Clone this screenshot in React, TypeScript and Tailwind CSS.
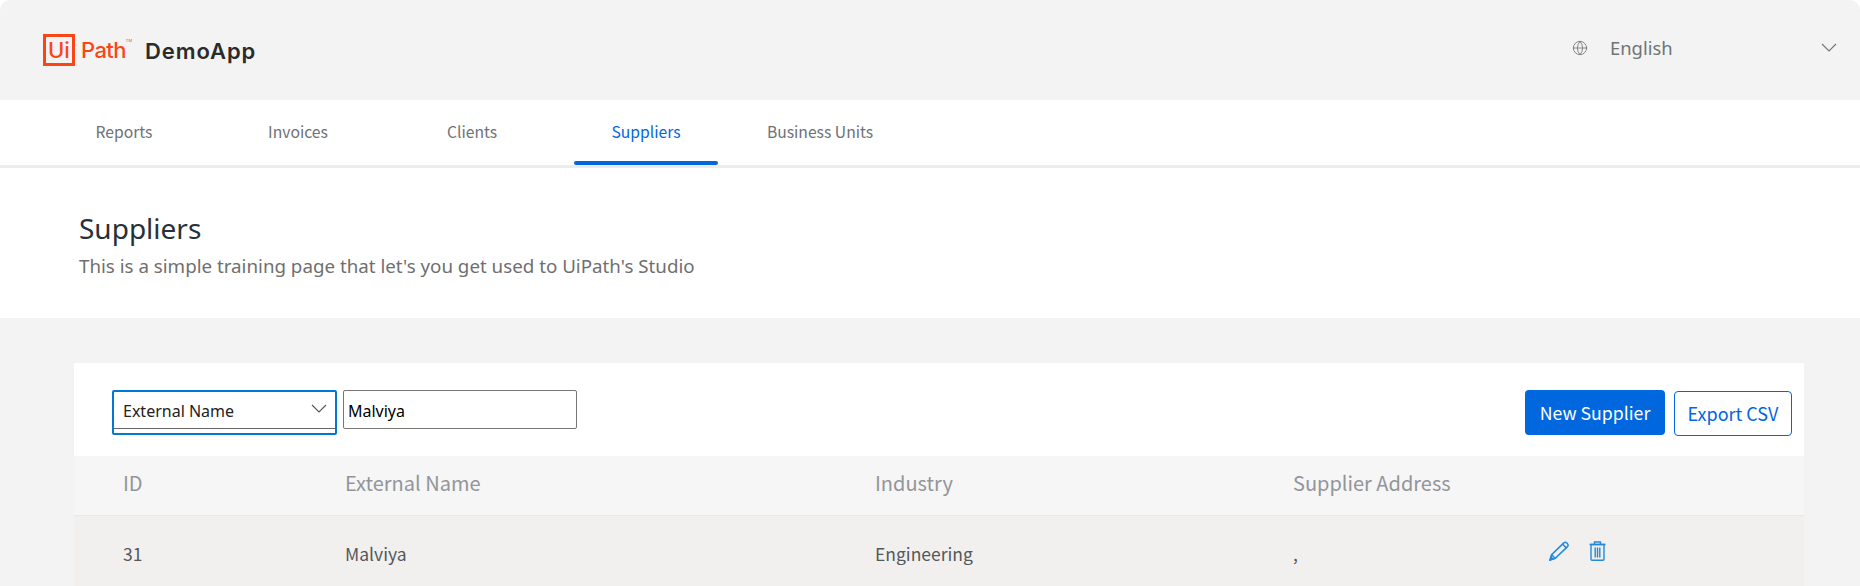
import { Globe } from 'lucide-react';

const TABS = ['Reports', 'Invoices', 'Clients', 'Suppliers', 'Business Units'];

function Chevron({ className }: { className?: string }) {
  return (
    <svg viewBox="0 0 16 9" fill="none" stroke="currentColor" strokeWidth="1.1" className={className}>
      <path d="M1 1l7 7 7-7" />
    </svg>
  );
}

function PencilIcon() {
  return (
    <svg viewBox="0 0 21 20" fill="none" stroke="#2389dc" strokeWidth="1.5" className="h-[20px] w-[21px]">
      <path d="M1 19l1.6-5.4L14.8 1.9a2 2 0 0 1 2.9 0l.8.8a2 2 0 0 1 0 2.9L6.3 17.4z" />
      <path d="M2.6 13.6l3.7 3.8M13.6 3.2l3.8 3.7" />
      <path d="M1 19l3-.9-2.1-2.1z" fill="#2389dc" />
    </svg>
  );
}

function TrashIcon() {
  return (
    <svg viewBox="0 0 17 20" fill="none" stroke="#2389dc" strokeWidth="1.4" className="h-[20px] w-[17px]">
      <path d="M0.5 3.5h16M5.5 3.3V1h6v2.3" />
      <path d="M2 3.5v14.8a1 1 0 0 0 1 1h11a1 1 0 0 0 1-1V3.5z" />
      <path d="M6.2 6.5v10M8.5 6.5v10M10.8 6.5v10" />
    </svg>
  );
}

export default function App() {
  return (
    <div className="h-[586px] overflow-hidden bg-white font-['Noto_Sans_CJK_SC','Noto_Sans',sans-serif]">
      <header className="flex h-[100px] items-center justify-between rounded-t-[10px] bg-[#f3f3f3] pl-[43px] pr-[23px]">
        <div className="flex items-center">
          <div className="flex items-center font-['Inter',sans-serif] text-[#fa4616]">
            <span className="flex h-[32px] w-[32px] items-center justify-center border-[3px] border-[#fa4616] text-[22px] leading-none font-medium">
              Ui
            </span>
            <span className="ml-[6px] text-[22px] leading-none font-medium tracking-[-0.6px]">Path</span>
            <span className="mb-[18px] text-[4px] leading-none">TM</span>
          </div>
          <span className="ml-[13px] pt-[3px] font-['Inter',sans-serif] text-[22px] font-semibold tracking-[0.9px] text-[#2b2b2b]">
            DemoApp
          </span>
        </div>
        <div className="flex w-[265px] -translate-y-[2px] items-center font-['Noto_Sans',sans-serif] text-[18.4px] text-[#6f7378]">
          <Globe className="h-[16px] w-[16px]" strokeWidth={1.25} />
          <span className="ml-[22px]">English</span>
          <Chevron className="ml-auto h-[9px] w-[16px]" />
        </div>
      </header>

      <nav className="flex h-[68px] gap-[30px] border-b-[3px] border-[#ececec] pl-[52px]">
        {TABS.map((tab) => (
          <a key={tab} className="flex h-[65px] w-[144px] flex-col items-center">
            <span
              className={
                tab === 'Suppliers'
                  ? 'flex flex-1 items-center pt-[2px] text-[15.7px] text-[#0067df]'
                  : 'flex flex-1 items-center pt-[2px] text-[15.7px] text-[#6e7177]'
              }
            >
              {tab}
            </span>
            {tab === 'Suppliers' && <span className="h-[4px] w-full rounded-full bg-[#0067df]" />}
            {tab !== 'Suppliers' && <span className="h-[4px]" />}
          </a>
        ))}
      </nav>

      <section className="flex h-[150px] flex-col pl-[79px] pt-[41px] font-['Noto_Sans',sans-serif]">
        <h1 className="text-[28px] leading-[38px] text-[#273139]">Suppliers</h1>
        <p className="mt-[6px] text-[18.75px] leading-[26px] text-[#6f6f6f]">
          This is a simple training page that let's you get used to UiPath's Studio
        </p>
      </section>

      <main className="bg-[#f3f3f3] pl-[74px] pr-[56px] pt-[45px]">
        <div className="flex h-[93px] items-start bg-white pl-[38px] pr-[12px] pt-[27px]">
          <div className="h-[45px] w-[225px] rounded-[2px] border-2 border-[#0078d4]">
            <div className="flex h-[37px] items-center justify-between border-b border-[#666] pl-[9px] pr-[8px] pt-[2px] font-['Noto_Sans',sans-serif] text-[16px] text-[#222]">
              External Name
              <Chevron className="h-[9px] w-[16px] -translate-y-[3px] text-[#555]" />
            </div>
          </div>
          <div className="ml-[6px] flex h-[39px] w-[234px] items-center rounded-[2px] border border-[#777] pl-[4px] pt-[2px] font-['Noto_Sans',sans-serif] text-[16px] text-black">
            Malviya
          </div>
          <button className="ml-auto h-[45px] w-[140px] rounded-[4px] bg-[#0067df] text-[17.7px] text-white">
            New Supplier
          </button>
          <button className="ml-[9px] mt-[1px] h-[45px] w-[118px] rounded-[4px] border border-[#0067df] text-[18px] text-[#0067df]">
            Export CSV
          </button>
        </div>

        <div className="grid h-[60px] grid-cols-[222px_530px_418px_256px_1fr] items-center border-b border-[#eae9e7] bg-[#f6f6f6] pb-[6px] pl-[49px] text-[20px] text-[#92959a]">
          <span>ID</span>
          <span>External Name</span>
          <span>Industry</span>
          <span>Supplier Address</span>
          <span />
        </div>

        <div className="grid h-[70px] grid-cols-[222px_530px_418px_256px_1fr] items-center bg-[#f1f0ef] pl-[49px] pt-[6px] text-[17.5px] text-[#55575b]">
          <span>31</span>
          <span>Malviya</span>
          <span>Engineering</span>
          <span>,</span>
          <span className="flex items-center gap-[19px] pb-[7px]">
            <PencilIcon />
            <TrashIcon />
          </span>
        </div>
      </main>
    </div>
  );
}
